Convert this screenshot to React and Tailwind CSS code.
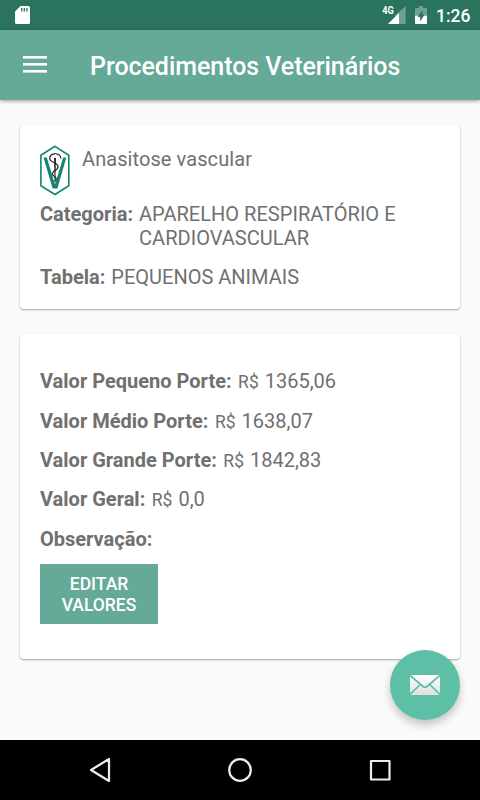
function StatusBar() {
  return (
    <div className="flex h-[30px] items-center bg-[#2a735e] pl-[15px] pr-[10px] text-white">
      <svg className="h-5 w-4" viewBox="0 0 16 20">
        <path fill="#fff" d="M5.500 1H13.500Q15 1 15 2.500V17.500Q15 19 13.500 19H1.500Q0 19 0 17.500V6.500Z" />
        <path stroke="#2a735e" strokeWidth="1.300" d="M6.700 3V6.500M9.300 3V6.500M11.900 3V6.500" />
      </svg>
      <div className="flex-1" />
      <svg className="h-[30px] w-[24px] overflow-visible" viewBox="0 0 24 30">
        <path fill="#6fa193" d="M22.700 6V24H5L12 17V15.500Z" />
        <path fill="#fff" d="M16 13V24H5Z" />
        <text x="-0.700" y="14" fill="#fff" className="text-[11px] font-bold [font-family:Roboto]" textLength="11.500" lengthAdjust="spacingAndGlyphs">4G</text>
      </svg>
      <svg className="ml-2 h-[30px] w-3" viewBox="0 0 12 30">
        <path fill="#6fa193" d="M4 6H8V8H11Q12 8 12 9V16H0V9Q0 8 1 8H4Z" />
        <path fill="#fff" d="M0 15.700H12V23Q12 24 11 24H1Q0 24 0 23Z" />
        <path fill="#2a735e" d="M7.300 10L2.600 17H5.200V21.500L9.600 14.500H7.300Z" />
      </svg>
      <span className="ml-[9px] w-[34px] whitespace-nowrap pt-[2px] text-[17.5px] leading-5 font-medium">1:26</span>
    </div>
  );
}

function Header() {
  return (
    <header className="relative flex h-[70px] items-center bg-[#65a998] pl-[23px] shadow-[0_1px_4px_rgba(0,0,0,0.4)]">
      <svg className="h-[18px] w-6" viewBox="0 0 24 18" fill="#fff">
        <rect y="0" width="24" height="2.600" />
        <rect y="7" width="24" height="2.600" />
        <rect y="14" width="24" height="2.600" />
      </svg>
      <h1 className="ml-[43px] pt-[3px] text-[25px] leading-[30px] font-medium tracking-[-0.05px] whitespace-nowrap text-white">
        Procedimentos Veterinários
      </h1>
    </header>
  );
}

function Emblem() {
  return (
    <svg className="h-[52px] w-[30px] shrink-0" viewBox="0 0 30 52">
      <path fill="none" stroke="#108571" strokeWidth="1.600" d="M15 2.300L28.800 11.300V41.700L15 50.500L0.900 41.700V11.300Z" />
      <path fill="#108571" d="M3.500 13.500H6.800L15 40.500L23.200 13.500H26.300L17.400 44.500H12.600Z" />
      <path fill="#111" d="M14.100 14H15.900L15.300 39H14.700Z" />
      <path fill="none" stroke="#111" strokeWidth="1.100" d="M21 14.500C20 8.500 12 8.500 10 12.500C8.500 16 12 18 15 19C19 21 19 24.500 15 26.500C11.500 28.500 12 31 14.500 32.500C17 34 16.500 36 14.500 37" />
    </svg>
  );
}

const prices = [
  ["Valor Pequeno Porte:", "1365,06"],
  ["Valor Médio Porte:", "1638,07"],
  ["Valor Grande Porte:", "1842,83"],
  ["Valor Geral:", "0,0"],
];

const cardClass = "rounded-[4px] bg-white px-5 shadow-[0_1px_2px_rgba(0,0,0,0.35)]";

export default function App() {
  return (
    <div className="relative flex h-[800px] w-[480px] flex-col overflow-hidden bg-[#fafafa] text-[20px] leading-6 text-[#707070] [font-family:Roboto,sans-serif]">
      <StatusBar />
      <Header />
      <main className="flex flex-1 flex-col gap-[25px] px-5 pt-[25px]">
        <section className={`${cardClass} h-[184px] pt-[19px]`}>
          <div className="flex h-[58px]">
            <Emblem />
            <p className="ml-3 pt-[3px] tracking-[0.08px]">Anasitose vascular</p>
          </div>
          <div className="flex gap-[6px]">
            <b className="whitespace-nowrap">Categoria:</b>
            <p className="w-[270px] tracking-[0.03px]">APARELHO RESPIRATÓRIO E CARDIOVASCULAR</p>
          </div>
          <div className="mt-[15px] flex gap-[6px]">
            <b>Tabela:</b>
            <p>PEQUENOS ANIMAIS</p>
          </div>
        </section>
        <section className={`${cardClass} h-[325px] pt-[35.3px]`}>
          <div className="flex flex-col gap-[15.4px]">
            {prices.map(([label, value]) => (
              <div key={label} className="flex h-6 items-baseline">
                <b>{label}</b>
                <span className="ml-[6.5px] text-[17.5px]">R$</span>
                <span className="ml-[6px]">{value}</span>
              </div>
            ))}
            <b>Observação:</b>
          </div>
          <button className="mt-[12.7px] block h-[60px] w-[118px] bg-[#65a998] px-4 pt-[3px] text-center text-[17.5px] leading-[21px] font-medium text-white">
            EDITAR VALORES
          </button>
        </section>
      </main>
      <nav className="flex h-[60px] items-center bg-black">
        <svg className="h-[60px] w-full" viewBox="0 0 480 60" fill="none" stroke="#eee" strokeWidth="2.200" strokeLinejoin="round">
          <path d="M109 19V41L91 30Z" />
          <circle cx="240" cy="30" r="10.800" />
          <rect x="371" y="21" width="18.500" height="18.500" />
        </svg>
      </nav>
      <button className="absolute top-[650px] left-[390px] flex size-[70px] items-center justify-center rounded-full bg-[#5dc0a6] shadow-[0_5px_9px_rgba(0,0,0,0.22)]">
        <svg className="h-5 w-[30px]" viewBox="0 0 30 20">
          <defs>
            <linearGradient id="paper" x1="0" y1="0" x2="0" y2="1">
              <stop offset="0" stopColor="#fff" />
              <stop offset="1" stopColor="#e0e0e0" />
            </linearGradient>
          </defs>
          <rect width="30" height="20" rx="1" fill="url(#paper)" />
          <path fill="none" stroke="#5dc0a6" strokeWidth="1.700" d="M0 0.300L13 11.500Q15 13.200 17 11.500L30 0.300M0 19.500L10.300 9.500M30 19.500L19.700 9.500" />
        </svg>
      </button>
    </div>
  );
}
